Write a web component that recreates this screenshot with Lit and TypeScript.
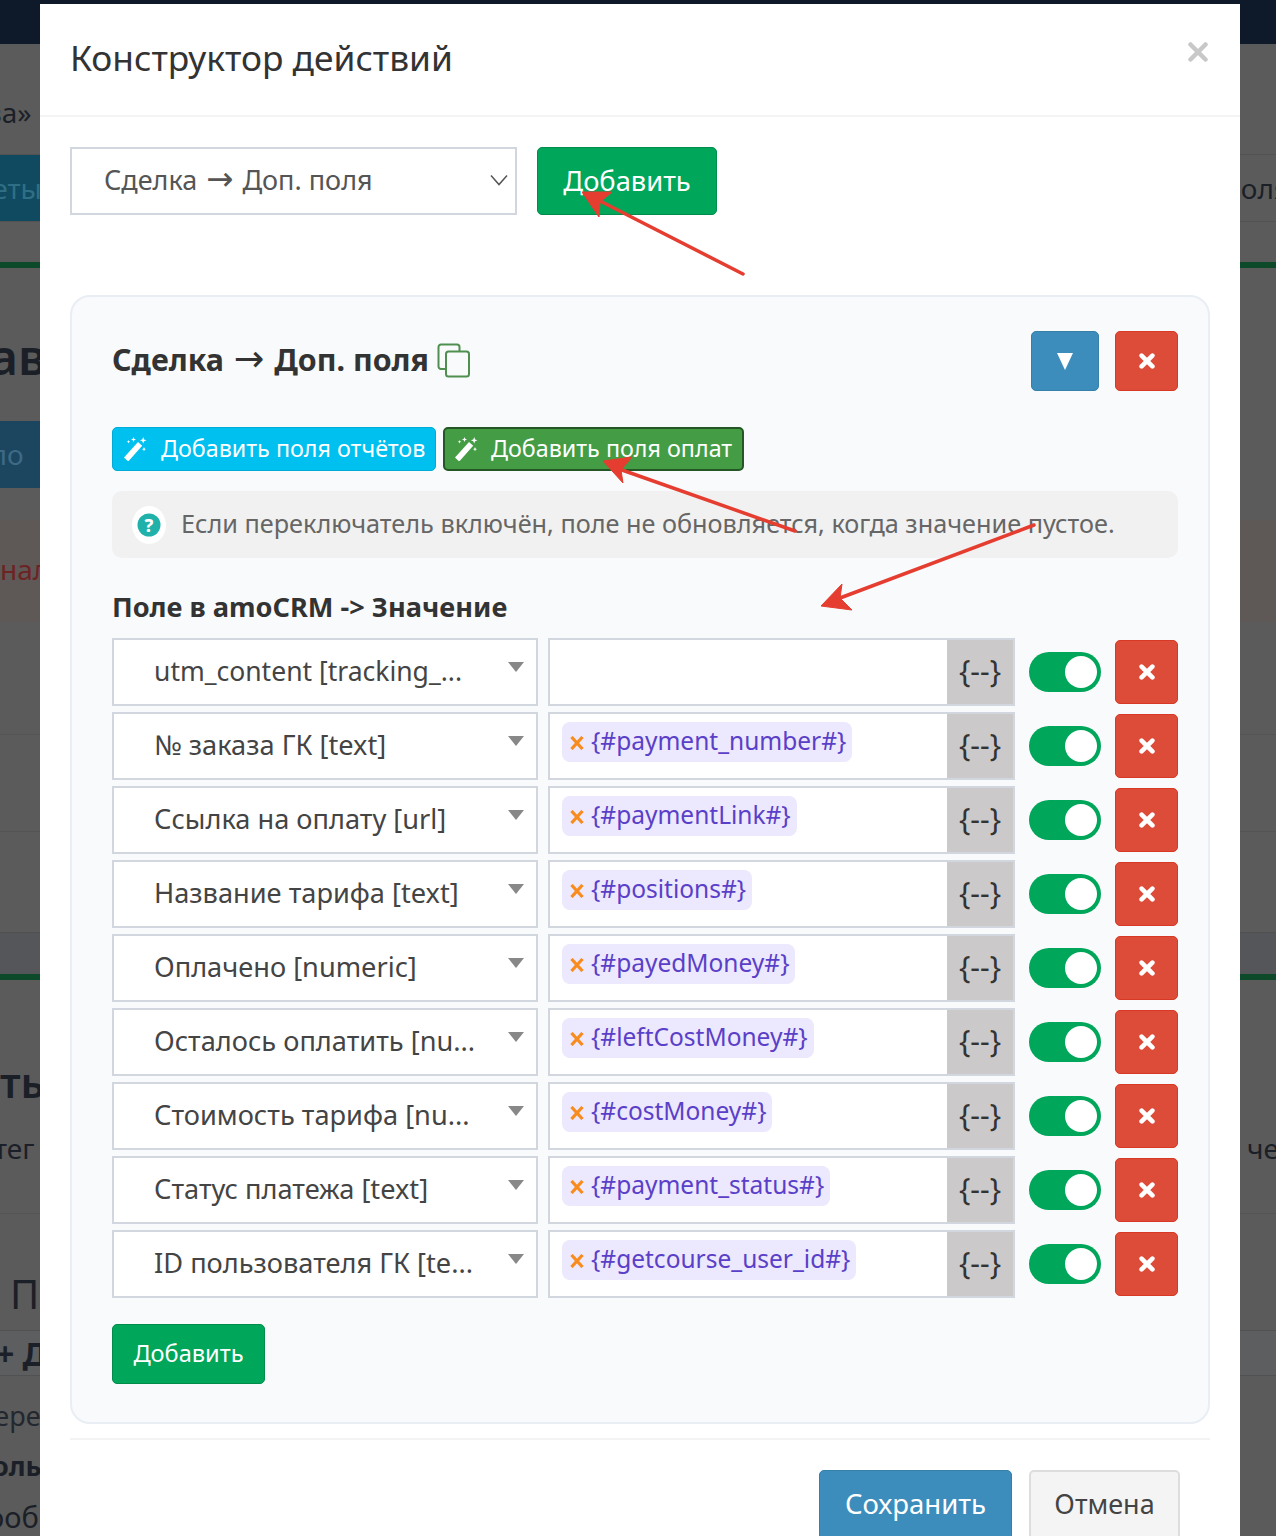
import { LitElement, html, css, svg } from "lit";
import { customElement } from "lit/decorators.js";

const rows = [
  ["utm_content [tracking_...", ""],
  ["№ заказа ГК [text]", "{#payment_number#}"],
  ["Ссылка на оплату [url]", "{#paymentLink#}"],
  ["Название тарифа [text]", "{#positions#}"],
  ["Оплачено [numeric]", "{#payedMoney#}"],
  ["Осталось оплатить [nu...", "{#leftCostMoney#}"],
  ["Стоимость тарифа [nu...", "{#costMoney#}"],
  ["Статус платежа [text]", "{#payment_status#}"],
  ["ID пользователя ГК [te...", "{#getcourse_user_id#}"],
];

const times = html`<svg class="times" viewBox="0 0 16 16" width="16" height="16"><path d="M2.6 2.6 13.4 13.4M13.4 2.6 2.6 13.4" stroke="#fff" stroke-width="4.6" stroke-linecap="round" fill="none"/></svg>`;
const wand = html`<svg viewBox="0 0 24 24" width="24" height="24" class="wand"><path d="M1 20.500 15 5l4.200 3.800L5.200 24.500z" fill="#fff"/><path d="M20.200 0l.9 2.400 2.400.9-2.400.9-.9 2.400-.9-2.400-2.400-.9 2.400-.9zM10.500 0l.7 1.800 1.800.7-1.800.7-.7 1.800-.7-1.800-1.800-.7 1.800-.7zM21 10l.6 1.600 1.400.6-1.400.6-.6 1.600-.6-1.600-1.400-.6 1.400-.6zM5.500 3l.5 1.300 1.300.5-1.300.5-.5 1.300-.5-1.300-1.300-.5 1.300-.5z" fill="#fff"/></svg>`;
const arrow = html`<span class="arr">→</span>`;

@customElement("app-root")
export class AppRoot extends LitElement {
  static styles = css`
    :host { display: block; width: 1276px; height: 1536px; position: relative; overflow: hidden; font-family: "Noto Sans", "Open Sans", sans-serif; color: #444; background: #5b5b5b; }
    * { box-sizing: border-box; }

    .backdrop { display: flex; flex-direction: column; height: 1536px; color: #1b1f27; font-size: 28px; }
    .band { display: flex; justify-content: space-between; align-items: center; flex: none; white-space: nowrap; overflow: hidden; border-bottom: 1px solid transparent; }
    .b-nav { height: 44px; background: #0e1a2a; }
    .b-a { height: 110px; padding-top: 26px; }
    .b-b { height: 68px; background: #5b5b5b; border-top: 1px solid #525252; border-bottom: 1px solid #525252; }
    .b-c { height: 40px; }
    .b-green { height: 6px; background: #0d4a2a; }
    .b-d { height: 153px; font-size: 48px; font-weight: 600; padding-top: 25px; }
    .b-e { height: 68px; }
    .b-f { height: 31px; }
    .b-red { height: 102px; background: #5e5857; color: #6e2323; padding-bottom: 4px; }
    .b-g { height: 39px; }
    .b-line { height: 74px; border-bottom: 1px solid #545454; }
    .b-line2 { height: 97px; border-bottom: 1px solid #545454; }
    .b-plain { height: 100px; border: 0; }
    .b-dark { height: 42px; background: #54565a; border-top: 1px solid #505050; }
    .b-j { height: 234px; flex-direction: column; align-items: stretch; justify-content: flex-start; padding-top: 73px; border-bottom: 1px solid #545454; }
    .edge { display: flex; justify-content: space-between; width: 100%; }
    .edge-big { font-size: 42px; font-weight: 600; margin-bottom: 19px; }
    .b-k { height: 116px; font-size: 40px; padding-top: 44px; }
    .b-l { height: 46px; background: #5c5e60; border-top: 1px solid #515151; border-bottom: 1px solid #515151; font-weight: 700; font-size: 32px; }
    .b-m { height: 66px; color: #23272f; font-size: 27px; padding-top: 14px; }
    .b-n { height: 48px; font-size: 27px; font-weight: 700; }
    .b-o { height: 46px; font-size: 29px; padding-top: 8px; }
    .tealcell { align-self: stretch; width: 40px; background: #0f4a60; color: #2f6f85; display: flex; align-items: center; overflow: hidden; }
    .bluecell { align-self: stretch; width: 40px; background: #1c4560; color: #3d6a85; display: flex; align-items: center; overflow: hidden; padding-bottom: 2px; }
    .s-va { margin-left: -14px; }
    .s-ety { margin-left: -22px; }
    .s-olya { margin-right: -14px; }
    .s-av { margin-left: -10px; }
    .s-lo { margin-left: -10px; }
    .s-p { margin-left: 10px; }
    .s-teg { margin-left: -6px; }
    .s-che { margin-right: -3px; }
    .s-plus { margin-left: -4px; }
    .s-ere { margin-left: -22px; }
    .s-ol { margin-left: -8px; }
    .s-ob { margin-left: -13px; }

    .modal { position: absolute; left: 40px; top: 4px; width: 1200px; height: 1532px; background: #fff; overflow: hidden; }
    .head { height: 113px; border-bottom: 2px solid #f3f3f3; display: flex; align-items: center; justify-content: space-between; padding: 0 32px 5px 30px; }
    .head svg { margin-top: -10px; }
    h1 { margin: 0; font-size: 35.300px; font-weight: 400; color: #333; }
    .body { padding: 30px 30px 0; }
    .top { display: flex; gap: 20px; height: 68px; }
    .sel { background: #fff; border: 2px solid #d2d6de; display: flex; align-items: center; position: relative; white-space: nowrap; overflow: hidden; }
    .top .sel { width: 447px; padding: 0 4px 2px 32px; font-size: 27px; line-height: 36px; color: #555; justify-content: space-between; }
    .arr { font-family: "DejaVu Sans", sans-serif; font-weight: 400; font-size: 1.200em; line-height: 1; margin: 0 2px; }
    .btn { border: 1px solid #008d4c; border-radius: 5px; background: #00a65a; color: #fff; display: flex; align-items: center; justify-content: center; white-space: nowrap; flex: none; padding-bottom: 2px; }
    .top .btn { width: 180px; font-size: 27.300px; }

    .card { margin-top: 80px; background: #f9fafc; border: 2px solid #e9edf4; border-radius: 20px; padding: 34px 30px 38px 40px; height: 1129px; }
    .title { display: flex; align-items: center; height: 60px; }
    h2 { margin: 0; font-size: 30.400px; line-height: 42px; font-weight: 700; color: #333; padding-bottom: 2px; }
    .copy { margin-left: 8px; flex: none; margin-top: -1px; }
    .title .sp { flex: 1; }
    .blue { background: #3c8dbc; border: 1px solid #367fa9; }
    .red { background: #dd4b39; border: 1px solid #d73925; border-radius: 5px; display: flex; align-items: center; justify-content: center; flex: none; }
    .down { width: 68px; height: 60px; border-radius: 5px; display: flex; align-items: center; justify-content: center; margin-right: 16px; }
    .title .red { width: 63px; height: 60px; }
    .actions { display: flex; gap: 7px; margin-top: 36px; }
    .mini { height: 44px; border-radius: 5px; display: flex; align-items: center; color: #fff; font-size: 23.300px; white-space: nowrap; padding: 0 0 3px 10px; }
    .wand { flex: none; margin-right: 14px; margin-top: 3px; }
    .m1 { width: 324px; background: #00c0ef; border: 1px solid #00acd6; }
    .m2 { width: 301px; background: #449d44; border: 2px solid #255625; padding-left: 9px; }
    .m2 .wand { margin-right: 13px; }
    .alert { margin-top: 20px; height: 67px; background: #f1f1f1; border-radius: 10px; display: flex; align-items: center; padding: 0 0 3px 20px; font-size: 25.250px; color: #666; white-space: nowrap; }
    .q { width: 34px; height: 38px; margin: 3px 15px 0 0; flex: none; display: block; }
    .q text { font-family: "Noto Sans", sans-serif; font-size: 18px; font-weight: 800; fill: #fff; text-anchor: middle; }
    h3 { margin: 30px 0 12px; height: 38px; line-height: 38px; font-size: 27.200px; font-weight: 700; color: #333; }
    .rows { display: flex; flex-direction: column; gap: 6px; }
    .row { display: flex; align-items: center; height: 68px; }
    .row .sel { width: 426px; height: 68px; padding: 0 0 3px 40px; font-size: 27.200px; color: #444; }
    .row .sel.latin { font-size: 26.500px; }
    .tri { position: absolute; right: 12px; top: 22px; width: 0; height: 0; border-left: 8px solid transparent; border-right: 8px solid transparent; border-top: 10px solid #888; }
    .inp { width: 467px; height: 68px; margin-left: 10px; background: #fff; border: 2px solid #d2d6de; display: flex; }
    .val { flex: 1; padding: 8px 12px; }
    .tag { display: inline-flex; align-items: center; height: 40px; padding: 0 6px 3px 7px; background: #ece8fd; border-radius: 8px; color: #5a3fc8; font-size: 24.500px; white-space: nowrap; }
    .tag svg { margin: 5px 6px 0 0; flex: none; }
    .addon { width: 66px; background: #cbc9ca; color: #333; font-size: 30px; display: flex; align-items: center; justify-content: center; white-space: nowrap; padding-bottom: 4px; }
    .tog { width: 72px; height: 40px; margin-left: 14px; border-radius: 20px; background: #00a65a; display: flex; align-items: center; justify-content: flex-end; padding-right: 4px; flex: none; }
    .tog i { width: 32px; height: 32px; border-radius: 50%; background: #fff; display: block; }
    .row .red { width: 63px; height: 64px; margin-left: 14px; }
    .add { width: 153px; height: 60px; margin-top: 26px; font-size: 23.600px; }
    hr { margin: 14px 0 0; border: 0; height: 2px; background: #f3f3f3; }
    .foot { display: flex; justify-content: flex-end; gap: 17px; margin-top: 30px; padding-right: 30px; }
    .foot div { height: 70px; border-radius: 5px; display: flex; align-items: center; justify-content: center; font-size: 27.500px; padding-bottom: 3px; }
    .save { width: 193px; background: #3c8dbc; color: #fff; border: 1px solid #367fa9; }
    .foot .cancel { width: 151px; background: #f4f4f4; color: #444; border: 2px solid #ddd; font-size: 27px; }

    .arrows { position: absolute; left: 0; top: 0; width: 1276px; height: 1536px; pointer-events: none; }
  `;

  render() {
    return html`
      <div class="backdrop">
        <div class="band b-nav"></div>
        <div class="band b-a"><span class="s-va">ва»</span></div>
        <div class="band b-b"><span class="tealcell"><span class="s-ety">кеты</span></span><span class="s-olya">оля</span></div>
        <div class="band b-c"></div>
        <div class="band b-green"></div>
        <div class="band b-d"><span class="s-av">ав</span></div>
        <div class="band b-e"><span class="bluecell"><span class="s-lo">по</span></span></div>
        <div class="band b-f"></div>
        <div class="band b-red"><span>нал</span></div>
        <div class="band b-g"></div>
        <div class="band b-line"></div>
        <div class="band b-line2"></div>
        <div class="band b-plain"></div>
        <div class="band b-dark"></div>
        <div class="band b-green"></div>
        <div class="band b-j">
          <div class="edge edge-big"><span>ть</span></div>
          <div class="edge"><span class="s-teg">тег</span><span class="s-che">че</span></div>
        </div>
        <div class="band b-k"><span class="s-p">П</span></div>
        <div class="band b-l"><span class="s-plus">+ Д</span></div>
        <div class="band b-m"><span class="s-ere">пере</span></div>
        <div class="band b-n"><span class="s-ol">оль</span></div>
        <div class="band b-o"><span class="s-ob">ооб</span></div>
      </div>

      <div class="modal">
        <div class="head">
          <h1>Конструктор действий</h1>
          <svg width="20" height="20" viewBox="0 0 20 20"><path d="M2.500 2.500 17.500 17.500M17.500 2.500 2.500 17.500" stroke="#c8c8c8" stroke-width="4.500" stroke-linecap="round" fill="none"/></svg>
        </div>
        <div class="body">
          <div class="top">
            <div class="sel"><span>Сделка ${arrow} Доп. поля</span>
              <svg width="24" height="24" viewBox="0 0 24 24"><path d="M4 7.500l8 9 8-9" stroke="#555" stroke-width="1.500" fill="none"/></svg>
            </div>
            <div class="btn">Добавить</div>
          </div>
          <div class="card">
            <div class="title">
              <h2>Сделка ${arrow} Доп. поля</h2>
              <svg class="copy" width="34" height="36" viewBox="0 0 34 36" fill="none" stroke="#4f8f4f" stroke-width="2">
                <path d="M8 26H4a2.500 2.500 0 0 1-2.500-2.500V4A2.500 2.500 0 0 1 4 1.500h16A2.500 2.500 0 0 1 22.500 4v4"/>
                <rect x="9" y="8.500" width="23" height="25" rx="2.500"/>
              </svg>
              <span class="sp"></span>
              <div class="down blue"><svg width="18" height="18" viewBox="0 0 18 18"><path d="M1 1h16L9 18z" fill="#fff"/></svg></div>
              <div class="red">${times}</div>
            </div>
            <div class="actions">
              <div class="mini m1">${wand}Добавить поля отчётов</div>
              <div class="mini m2">${wand}Добавить поля оплат</div>
            </div>
            <div class="alert">
              <svg class="q" viewBox="0 0 34 38"><ellipse cx="17" cy="19" rx="17" ry="19" fill="#fff"/><circle cx="17" cy="19" r="11.500" fill="#20b2aa"/><text x="17" y="25.500">?</text></svg>
              <span>Если переключатель включён, поле не обновляется, когда значение пустое.</span>
            </div>
            <h3>Поле в amoCRM -&gt; Значение</h3>
            <div class="rows">
              ${rows.map(([name, tag]) => html`
                <div class="row">
                  <div class="sel ${name.startsWith("utm") ? "latin" : ""}"><span>${name}</span><i class="tri"></i></div>
                  <div class="inp">
                    <div class="val">${tag ? html`<span class="tag"><svg width="16" height="14" viewBox="0 0 16 14"><path d="M2.500 1 13.500 13M13.500 1 2.500 13" stroke="#f78c1f" stroke-width="3.200" fill="none"/></svg>${tag}</span>` : ""}</div>
                    <div class="addon">{--}</div>
                  </div>
                  <div class="tog"><i></i></div>
                  <div class="red">${times}</div>
                </div>`)}
            </div>
            <div class="btn add">Добавить</div>
          </div>
          <hr />
          <div class="foot">
            <div class="save">Сохранить</div>
            <div class="cancel">Отмена</div>
          </div>
        </div>
      </div>

      <svg class="arrows" viewBox="0 0 1276 1536">
        ${svg`<g fill="#e53d30" stroke="#e53d30">
          <path d="M743 274 600 201" stroke-width="3.500" stroke-linecap="round"/>
          <path d="M582 192 612 192 600 202 599 217z" stroke-width="1"/>
          <path d="M795 531 622 470" stroke-width="3.500" stroke-linecap="round"/>
          <path d="M603 461 632 457 621 470 623 483z" stroke-width="1"/>
          <path d="M1034 525 840 598" stroke-width="3.500" stroke-linecap="round"/>
          <path d="M821 606 842 584 840 598 852 610z" stroke-width="1"/>
        </g>`}
      </svg>
    `;
  }
}
